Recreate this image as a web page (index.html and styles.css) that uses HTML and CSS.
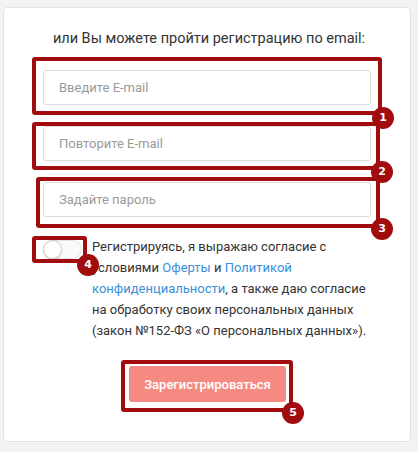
FILE: index.html
```html
<!DOCTYPE html>
<html lang="ru">
<head>
<meta charset="utf-8">
<link rel="stylesheet" href="styles.css">
</head>
<body>
<div class="card">
  <div class="title">или Вы можете пройти регистрацию по email:</div>
  <div class="fields">
    <input class="field" type="text" placeholder="Введите E-mail">
    <input class="field" type="text" placeholder="Повторите E-mail">
    <input class="field" type="password" placeholder="Задайте пароль">
  </div>
  <div class="consent">
    <span class="toggle"><span class="knob"></span></span>
    <p class="consent-text">Регистрируясь, я выражаю согласие с условиями <a href="#">Оферты</a> и <a href="#">Политикой конфиденциальности</a>, а также даю согласие на обработку своих персональных данных (закон №152-ФЗ «О персональных данных»).</p>
  </div>
  <div class="actions">
    <button class="submit" type="button">Зарегистрироваться</button>
  </div>

  <div class="mark m1"></div>
  <div class="mark m2"></div>
  <div class="mark m3"></div>
  <div class="mark m4"></div>
  <div class="mark m5"></div>
  <div class="badge b1">1</div>
  <div class="badge b2">2</div>
  <div class="badge b3">3</div>
  <div class="badge b4">4</div>
  <div class="badge b5">5</div>
</div>
</body>
</html>
```

FILE: styles.css
```css
* { box-sizing: border-box; }
html, body { margin: 0; padding: 0; }
body {
  background: #f2f2f2;
  font-family: Roboto, "Liberation Sans", Arial, sans-serif;
  color: #333;
  width: 418px;
  height: 452px;
  overflow: hidden;
}
.card {
  position: relative;
  margin: 7px 0 0 3px;
  width: 408px;
  height: 435px;
  background: #fff;
  border: 1px solid #e2e2e2;
  border-radius: 4px;
  padding: 22px 39px 0 39px;
}
.title {
  font-size: 14.5px;
  line-height: 18px;
  text-align: center;
  color: #333;
  padding-left: 4px;
}
.fields {
  display: flex;
  flex-direction: column;
  gap: 21px;
  margin-top: 22px;
}
.field {
  display: block;
  width: 328px;
  height: 35px;
  border: 1px solid #dcdcdc;
  border-radius: 3px;
  padding: 0 0 0 15px;
  font-family: Roboto, "Liberation Sans", Arial, sans-serif;
  font-size: 13px;
  color: #333;
  background: #fff;
  outline: none;
}
.field::placeholder { color: #9a9a9a; }
.consent {
  display: flex;
  gap: 10px;
  margin-top: 19px;
  align-items: flex-start;
}
.toggle {
  flex: 0 0 39px;
  position: relative;
  height: 19px;
  margin-top: 4px;
  border: 1px solid #e3e3e3;
  border-radius: 10px;
  background: #fafafa;
}
.knob {
  position: absolute;
  left: -1px;
  top: -1px;
  width: 19px;
  height: 19px;
  border-radius: 50%;
  background: #fff;
  border: 1px solid #cfcfcf;
  box-shadow: 0 1px 2px rgba(0,0,0,0.15);
}
.consent-text {
  margin: 0;
  font-size: 13px;
  line-height: 21px;
  color: #333;
  width: 279px;
}
.consent-text a {
  color: #3a8fd9;
  text-decoration: none;
}
.actions {
  display: flex;
  justify-content: center;
  margin-top: 25px;
  padding-left: 1px;
}
.submit {
  width: 157px;
  height: 36px;
  border: none;
  border-radius: 3px;
  background: #f58a82;
  color: #fff;
  font-family: Roboto, "Liberation Sans", Arial, sans-serif;
  font-size: 13px;
  font-weight: 500;
  padding: 0;
}
.mark {
  position: absolute;
  border: 4px solid #a10d0e;
  border-radius: 3px;
}
.m1 { left: 28px; top: 49px; width: 350px; height: 58px; }
.m2 { left: 28px; top: 114px; width: 348px; height: 48px; }
.m3 { left: 32px; top: 169px; width: 344px; height: 51px; }
.m4 { left: 28px; top: 228px; width: 55px; height: 27px; }
.m5 { left: 117px; top: 352px; width: 172px; height: 52px; }
.badge {
  position: absolute;
  width: 22px;
  height: 22px;
  border-radius: 50%;
  background: #a10d0e;
  color: #fff;
  font-family: "DejaVu Sans", "Liberation Sans", sans-serif;
  font-weight: bold;
  font-size: 11px;
  line-height: 22px;
  text-align: center;
}
.b1 { left: 368px; top: 99px; }
.b2 { left: 367px; top: 153px; }
.b3 { left: 367px; top: 210px; }
.b4 { left: 73px; top: 246px; }
.b5 { left: 278px; top: 394px; }
```
